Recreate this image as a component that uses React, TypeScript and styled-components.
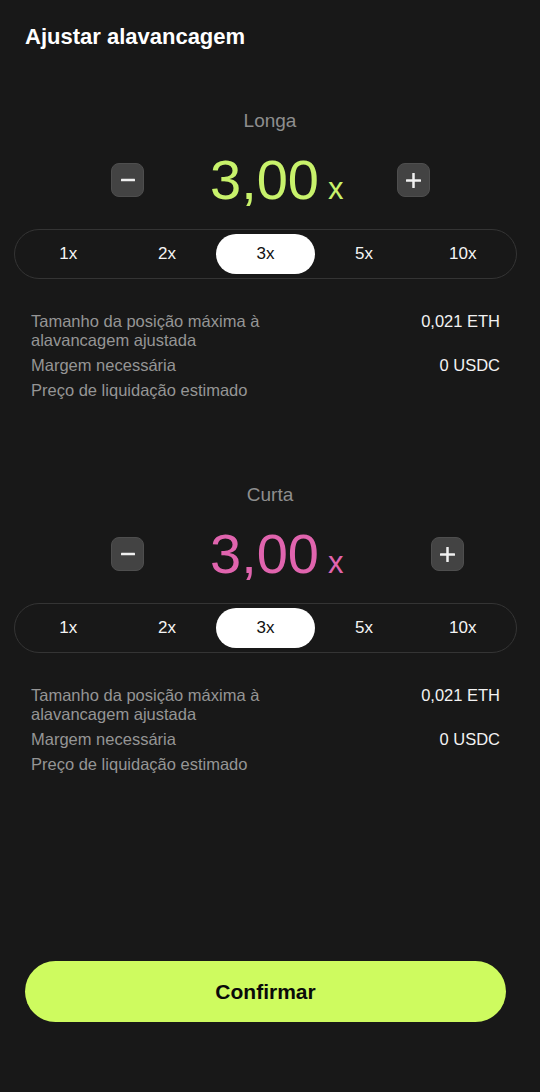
import React, { useState } from 'react'
import styled, { createGlobalStyle } from 'styled-components'

const GlobalStyle = createGlobalStyle`
  html, body {
    margin: 0;
    padding: 0;
    background: #181818;
  }
  * {
    box-sizing: border-box;
  }
`

const Page = styled.div`
  display: flex;
  flex-direction: column;
  width: 540px;
  height: 1092px;
  padding-top: 24px;
  background: #181818;
  font-family: 'Liberation Sans', Arial, sans-serif;
  color: #f2f2f2;
  overflow: hidden;
`

const Title = styled.h1`
  margin: 0 0 0 25px;
  font-size: 22px;
  line-height: 26px;
  font-weight: 700;
  color: #ffffff;
`

const Section = styled.section<{ $top: number }>`
  display: flex;
  flex-direction: column;
  margin-top: ${(p) => p.$top}px;
`

const SideLabel = styled.div`
  text-align: center;
  font-size: 19px;
  line-height: 22px;
  color: #8e8e8e;
`

const StepRow = styled.div`
  display: flex;
  align-items: center;
  height: 34px;
  margin-top: 31px;
  padding-left: 111px;
`

const StepButton = styled.button<{ $gap?: number }>`
  display: flex;
  align-items: center;
  justify-content: center;
  width: 33px;
  height: 34px;
  margin-left: ${(p) => p.$gap ?? 0}px;
  padding: 0;
  border: 1px solid #4e4e4e;
  border-radius: 8px;
  background: #434343;
  cursor: pointer;
`

const Value = styled.div<{ $color: string }>`
  display: flex;
  align-items: baseline;
  gap: 9px;
  margin-left: 66px;
  color: ${(p) => p.$color};
`

const Number = styled.span`
  font-size: 56px;
  line-height: 56px;
`

const Suffix = styled.span`
  font-size: 31px;
  line-height: 31px;
`

const Segments = styled.div`
  display: grid;
  grid-template-columns: repeat(5, 1fr);
  height: 50px;
  margin: 32px 23px 0 14px;
  padding: 4px;
  border: 1px solid #343434;
  border-radius: 25px;
`

const Segment = styled.button<{ $active: boolean }>`
  height: 40px;
  padding: 0;
  border: none;
  border-radius: 20px;
  background: ${(p) => (p.$active ? '#ffffff' : 'transparent')};
  color: ${(p) => (p.$active ? '#111111' : '#f4f4f4')};
  font-family: inherit;
  font-size: 17px;
  cursor: pointer;
`

const InfoList = styled.div`
  display: flex;
  flex-direction: column;
  gap: 6px;
  margin-top: 33px;
  padding: 0 40px 0 31px;
`

const InfoRow = styled.div`
  display: flex;
  justify-content: space-between;
  align-items: flex-start;
  font-size: 16.5px;
  line-height: 19px;
`

const InfoLabel = styled.span`
  max-width: 265px;
  color: #959595;
`

const InfoValue = styled.span`
  color: #f2f2f2;
  white-space: nowrap;
`

const ConfirmButton = styled.button`
  height: 61px;
  margin: auto 34px 70px 25px;
  border: none;
  border-radius: 31px;
  background: #cefb5f;
  color: #0a0a0a;
  font-family: inherit;
  font-size: 21px;
  font-weight: 700;
  cursor: pointer;
`

const MinusIcon = () => (
  <svg width="14" height="14" viewBox="0 0 14 14">
    <rect x="0" y="5.75" width="14" height="2.5" rx="0.5" fill="#f0f0f0" />
  </svg>
)

const PlusIcon = () => (
  <svg width="15" height="15" viewBox="0 0 15 15">
    <rect x="0" y="6.25" width="15" height="2.5" rx="0.5" fill="#f0f0f0" />
    <rect x="6.25" y="0" width="2.5" height="15" rx="0.5" fill="#f0f0f0" />
  </svg>
)

const options = [1, 2, 3, 5, 10]

interface LeverageProps {
  label: string
  color: string
  top: number
  plusGap: number
}

const LeverageSection: React.FC<LeverageProps> = ({ label, color, top, plusGap }) => {
  const [lev, setLev] = useState(3)
  return (
    <Section $top={top}>
      <SideLabel>{label}</SideLabel>
      <StepRow>
        <StepButton aria-label="diminuir" onClick={() => setLev(Math.max(1, lev - 1))}>
          <MinusIcon />
        </StepButton>
        <Value $color={color}>
          <Number>{lev.toFixed(2).replace('.', ',')}</Number>
          <Suffix>x</Suffix>
        </Value>
        <StepButton $gap={plusGap} aria-label="aumentar" onClick={() => setLev(Math.min(10, lev + 1))}>
          <PlusIcon />
        </StepButton>
      </StepRow>
      <Segments>
        {options.map((o) => (
          <Segment key={o} $active={o === lev} onClick={() => setLev(o)}>
            {o}x
          </Segment>
        ))}
      </Segments>
      <InfoList>
        <InfoRow>
          <InfoLabel>Tamanho da posição máxima à alavancagem ajustada</InfoLabel>
          <InfoValue>0,021 ETH</InfoValue>
        </InfoRow>
        <InfoRow>
          <InfoLabel>Margem necessária</InfoLabel>
          <InfoValue>0 USDC</InfoValue>
        </InfoRow>
        <InfoRow>
          <InfoLabel>Preço de liquidação estimado</InfoLabel>
        </InfoRow>
      </InfoList>
    </Section>
  )
}

const App: React.FC = () => {
  return (
    <>
      <GlobalStyle />
      <Page>
        <Title>Ajustar alavancagem</Title>
        <LeverageSection label="Longa" color="#c8f26b" top={60} plusGap={53} />
        <LeverageSection label="Curta" color="#e064ae" top={84} plusGap={87} />
        <ConfirmButton>Confirmar</ConfirmButton>
      </Page>
    </>
  )
}

export default App
